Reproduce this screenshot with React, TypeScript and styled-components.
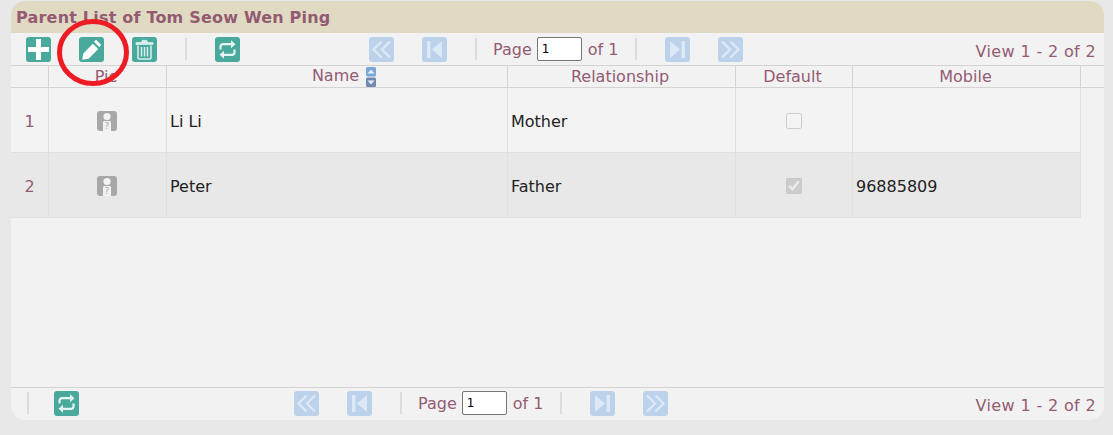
import React from "react";
import styled, { createGlobalStyle } from "styled-components";

const GlobalStyle = createGlobalStyle`
  html, body {
    margin: 0;
    padding: 0;
    background: #e8e8e8;
  }
  body {
    font-family: "DejaVu Sans", Verdana, sans-serif;
  }
`;

const Page = styled.div`
  position: relative;
  width: 1113px;
  height: 435px;
  padding: 1px 9px 0 11px;
  box-sizing: border-box;
`;

const Panel = styled.div`
  height: 419px;
  display: flex;
  flex-direction: column;
  background: #f2f2f2;
  border-radius: 14px;
  overflow: hidden;
`;

const Title = styled.div`
  height: 32px;
  flex: none;
  padding: 8px 0 0 5px;
  box-sizing: border-box;
  background: #e0dac3;
  color: #935a72;
  font-size: 16px;
  font-weight: bold;
  letter-spacing: 0.2px;
  line-height: 18px;
`;

const Bar = styled.div<{ $left: number; $top?: boolean }>`
  height: ${(p) => (p.$top ? 32 : 33)}px;
  flex: none;
  display: grid;
  grid-template-columns: ${(p) => p.$left}px auto 1fr;
  align-items: center;
  box-sizing: border-box;
  padding-bottom: ${(p) => (p.$top ? 0 : 2)}px;
  ${(p) => (p.$top ? "" : "border-top: 1px solid #d3d3d3;")}
`;

const Group = styled.div<{ $pad: number; $gap: number }>`
  display: flex;
  align-items: center;
  padding-left: ${(p) => p.$pad}px;
  gap: ${(p) => p.$gap}px;
`;

const Pager = styled.div`
  display: flex;
  align-items: center;
`;

const Sep = styled.span<{ $ml?: number; $mr?: number }>`
  width: 2px;
  height: 22px;
  flex: none;
  border-left: 1px solid #dcdcdc;
  border-right: 1px solid #dcdcdc;
  box-sizing: border-box;
  margin: 0 ${(p) => p.$mr ?? 0}px 0 ${(p) => p.$ml ?? 0}px;
`;

const Tile = styled.span<{ $tone: "green" | "blue"; $ml?: number }>`
  width: 25px;
  height: 25px;
  flex: none;
  display: block;
  margin-left: ${(p) => p.$ml ?? 0}px;
  border-radius: 3px;
  background: ${(p) => (p.$tone === "green" ? "#48a99c" : "#bbd2ea")};
  svg {
    display: block;
  }
`;

const PagerText = styled.span`
  padding-top: 2px;
  color: #945b73;
  font-size: 16px;
  line-height: 18px;
  white-space: pre;
`;

const PageInput = styled.input`
  width: 45px;
  height: 24px;
  margin: 0 6px 0 5px;
  padding: 1px 4px;
  box-sizing: border-box;
  border: 1px solid #767676;
  border-radius: 2px;
  background: #fff;
  color: #000;
  font-family: "DejaVu Sans", Verdana, sans-serif;
  font-size: 12px;
  outline: none;
`;

const ViewText = styled.span`
  justify-self: end;
  padding: 5px 8px 0 0;
  color: #945b73;
  font-size: 16px;
  letter-spacing: 0.35px;
  line-height: 18px;
`;

const Grid = styled.table`
  width: 1070px;
  table-layout: fixed;
  border-collapse: separate;
  border-spacing: 0;
`;

const HeadWrap = styled.div`
  flex: none;
  height: 21px;
  border-top: 1px solid #d3d3d3;
  border-bottom: 1px solid #d3d3d3;
`;

const Body = styled.div`
  flex: 1;
  min-height: 0;
`;

const HeadCell = styled.th<{ $shift?: number; $trim?: number }>`
  height: 21px;
  padding: 0 ${(p) => p.$trim ?? 0}px 0 ${(p) => p.$shift ?? 0}px;
  box-sizing: border-box;
  border-right: 1px solid #d3d3d3;
  color: #945b73;
  font-size: 16px;
  font-weight: normal;
  line-height: 20px;
  text-align: center;
  white-space: nowrap;
`;

const Row = styled.tr<{ $alt?: boolean }>`
  background: ${(p) => (p.$alt ? "#e8e8e8" : "#f3f3f3")};
`;

const Cell = styled.td<{ $center?: boolean; $index?: boolean }>`
  height: 65px;
  padding: 2px 0 0 ${(p) => (p.$center ? 0 : 3)}px;
  box-sizing: border-box;
  border-right: 1px solid #dfdfdf;
  border-bottom: 1px solid #dfdfdf;
  color: ${(p) => (p.$index ? "#945b73" : "#222")};
  font-size: 16px;
  text-align: ${(p) => (p.$center ? "center" : "left")};
  vertical-align: middle;
`;

const Check = styled.input`
  display: block;
  width: 16px;
  height: 16px;
  margin: 0 auto;
`;

const Sort = styled.svg`
  display: inline-block;
  vertical-align: -6px;
  margin-left: 7px;
`;

const Avatar = styled.svg`
  display: block;
  margin: 0 0 0 48px;
`;

const Circle = styled.svg`
  position: absolute;
  left: 56px;
  top: 16px;
  pointer-events: none;
`;

const Glyph = ({ d, color = "#fff", line }: { d: string; color?: string; line?: boolean }) => (
  <svg width="25" height="25" viewBox="0 0 25 25">
    <path
      d={d}
      fill={line ? "none" : color}
      stroke={line ? color : "none"}
      strokeWidth={line ? 2.4 : 0}
    />
  </svg>
);

const Plus = () => (
  <Tile $tone="green">
    <Glyph d="M10 2h5v8h8v5h-8v8h-5v-8H2v-5h8z" />
  </Tile>
);

const Pencil = () => (
  <Tile $tone="green">
    <Glyph d="M17.8 3.4l3.8 3.8c.5.5.5 1 0 1.5l-1.4 1.4-5.3-5.3 1.4-1.4c.5-.5 1-.5 1.5 0zM13.9 6.8l5.3 5.3-9.6 9.6-6.4 1.1 1.1-6.4z" />
  </Tile>
);

const Trash = () => (
  <Tile $tone="green">
    <svg width="25" height="25" viewBox="0 0 25 25">
      <path d="M4 5.5h17v2H4zM9.5 5.5l.8-2.2h4.4l.8 2.2" fill="#d8eeea" stroke="#d8eeea" strokeWidth="0.8" />
      <path d="M6 8.5v12.2c0 .8.5 1.3 1.3 1.3h10.4c.8 0 1.3-.5 1.3-1.3V8.5" fill="none" stroke="#d8eeea" strokeWidth="1.6" />
      <path d="M9.5 10v9.5M12.5 10v9.5M15.5 10v9.5" stroke="#d8eeea" strokeWidth="1.5" />
    </svg>
  </Tile>
);

const Refresh = () => (
  <Tile $tone="green">
    <svg width="25" height="25" viewBox="0 0 25 25" fill="none" stroke="#e6f4f2" strokeWidth="2.2">
      <path d="M5.5 12.5V9.8c0-1.6 1-2.6 2.6-2.6h9.4" />
      <path d="M19.5 12.5v2.7c0 1.6-1 2.6-2.6 2.6H7.5" />
      <path d="M16 3.2l4.5 4-4.5 4z" fill="#e6f4f2" stroke="none" />
      <path d="M9 13.8l-4.5 4 4.5 4z" fill="#e6f4f2" stroke="none" />
    </svg>
  </Tile>
);

const pale = "#dce8f5";

const PagerIcon = ({ kind, ml }: { kind: "first" | "prev" | "next" | "last"; ml?: number }) => {
  const shapes = {
    first: <Glyph line color={pale} d="M12.5 4.5l-8 8 8 8M21 4.5l-8 8 8 8" />,
    prev: <Glyph color={pale} d="M5 4h3.5v17H5zM20 4v17l-10-8.5z" />,
    next: <Glyph color={pale} d="M16.5 4H20v17h-3.5zM5 4v17l10-8.5z" />,
    last: <Glyph line color={pale} d="M4 4.5l8 8-8 8M12.5 4.5l8 8-8 8" />,
  };
  return (
    <Tile $tone="blue" $ml={ml}>
      {shapes[kind]}
    </Tile>
  );
};

const PagerBlock = () => (
  <Pager>
    <PagerIcon kind="first" />
    <PagerIcon kind="prev" ml={28} />
    <Sep $ml={28} $mr={16} />
    <PagerText>Page</PagerText>
    <PageInput defaultValue="1" />
    <PagerText>of 1</PagerText>
    <Sep $ml={17} $mr={28} />
    <PagerIcon kind="next" />
    <PagerIcon kind="last" ml={28} />
  </Pager>
);

const Person = () => (
  <Avatar width="20" height="20" viewBox="0 0 20 20">
    <rect width="20" height="20" rx="3" fill="#a8a8a8" />
    <circle cx="10" cy="5.5" r="3.6" fill="#f2f2f2" />
    <path d="M6 20v-8.5c0-1 .6-1.5 1.5-1.5h5c.9 0 1.5.5 1.5 1.5V20z" fill="#f2f2f2" />
    <text x="10" y="18" fontSize="9" fontFamily="DejaVu Sans" textAnchor="middle" fill="#a8a8a8">
      ?
    </text>
  </Avatar>
);

const widths = [38, 118, 341, 228, 117, 228];

const Cols = () => (
  <colgroup>
    {widths.map((w, i) => (
      <col key={i} style={{ width: w }} />
    ))}
  </colgroup>
);

const people = [
  { id: 1, name: "Li Li", rel: "Mother", isDefault: false, mobile: "" },
  { id: 2, name: "Peter", rel: "Father", isDefault: true, mobile: "96885809" },
];

export default function App() {
  return (
    <>
      <GlobalStyle />
      <Page>
        <Panel>
          <Title>Parent List of Tom Seow Wen Ping</Title>
          <Bar $left={358} $top>
            <Group $pad={15} $gap={28}>
              <Plus />
              <Pencil />
              <Trash />
              <Sep />
              <Refresh />
            </Group>
            <PagerBlock />
            <ViewText>View 1 - 2 of 2</ViewText>
          </Bar>
          <HeadWrap>
            <Grid>
              <Cols />
              <thead>
                <tr>
                  <HeadCell />
                  <HeadCell $trim={3}>Pic</HeadCell>
                  <HeadCell $shift={14}>
                    Name
                    <Sort width="10" height="20" viewBox="0 0 10 20">
                      <rect width="10" height="9.5" rx="1.5" fill="#7ba6da" />
                      <rect y="10.5" width="10" height="9.5" rx="1.5" fill="#6f88ad" />
                      <path d="M5 2.5L8.5 6.5H1.5z" fill="#e6eef8" />
                      <path d="M5 17.5L8.5 13.5H1.5z" fill="#e6eef8" />
                    </Sort>
                  </HeadCell>
                  <HeadCell $trim={3}>Relationship</HeadCell>
                  <HeadCell $trim={3}>Default</HeadCell>
                  <HeadCell $trim={2}>Mobile</HeadCell>
                </tr>
              </thead>
            </Grid>
          </HeadWrap>
          <Body>
            <Grid>
              <Cols />
              <tbody>
                {people.map((p, i) => (
                  <Row key={p.id} $alt={i % 2 === 1}>
                    <Cell $center $index>
                      {p.id}
                    </Cell>
                    <Cell $center>
                      <Person />
                    </Cell>
                    <Cell>{p.name}</Cell>
                    <Cell>{p.rel}</Cell>
                    <Cell $center>
                      <Check type="checkbox" disabled defaultChecked={p.isDefault} />
                    </Cell>
                    <Cell>{p.mobile}</Cell>
                  </Row>
                ))}
              </tbody>
            </Grid>
          </Body>
          <Bar $left={283}>
            <Group $pad={16} $gap={25}>
              <Sep />
              <Refresh />
            </Group>
            <PagerBlock />
            <ViewText>View 1 - 2 of 2</ViewText>
          </Bar>
        </Panel>
        <Circle width="76" height="74" viewBox="0 0 76 74">
          <ellipse cx="37" cy="36.5" rx="33.5" ry="31" fill="none" stroke="#ed1c24" strokeWidth="5" />
        </Circle>
      </Page>
    </>
  );
}
